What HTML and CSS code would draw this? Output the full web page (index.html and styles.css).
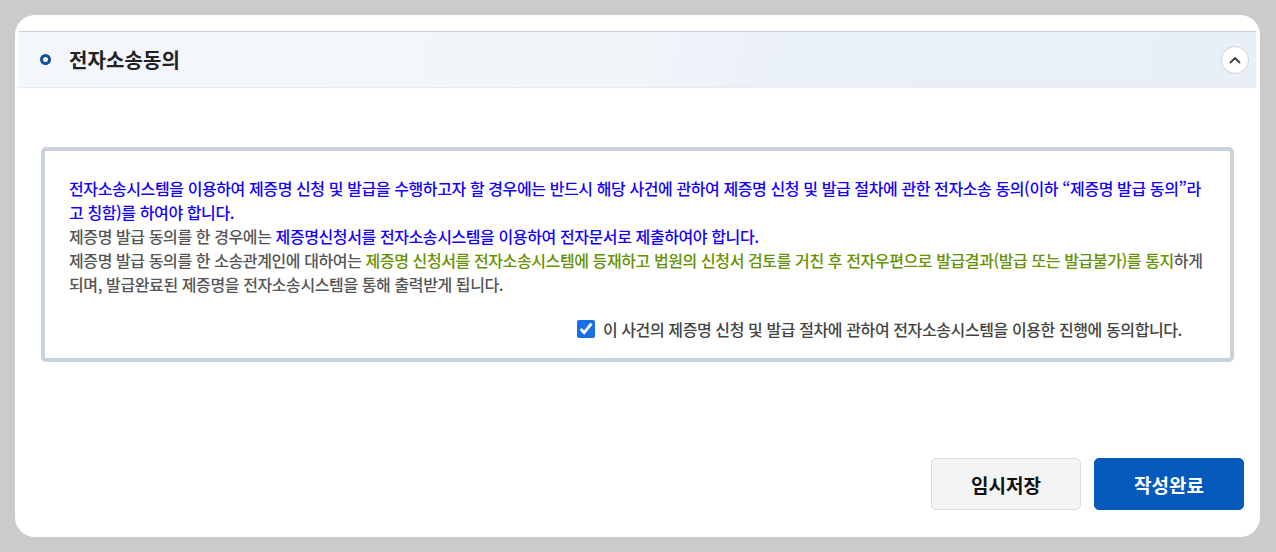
FILE: index.html
```html
<!DOCTYPE html>
<html lang="ko">
<head>
  <meta charset="UTF-8" />
  <title>전자소송동의</title>
  <link rel="stylesheet" href="styles.css">
</head>
<body>
  <div class="card">
    <div class="sec-head">
      <span class="bullet"></span>
      <h2 class="sec-title">전자소송동의</h2>
      <button class="toggle" type="button" aria-label="접기">
        <svg width="12" height="8" viewBox="0 0 12 8"><path d="M1.5 6.5 L6 2 L10.5 6.5" fill="none" stroke="#444" stroke-width="1.8" stroke-linecap="round" stroke-linejoin="round"/></svg>
      </button>
    </div>

    <div class="agree-box">
      <p class="txt">
        <span class="blue">전자소송시스템을 이용하여 제증명 신청 및 발급을 수행하고자 할 경우에는 반드시 해당 사건에 관하여 제증명 신청 및 발급 절차에 관한 전자소송 동의(이하 “제증명 발급 동의”라고 칭함)를 하여야 합니다.</span><br />
        제증명 발급 동의를 한 경우에는 <span class="blue">제증명신청서를 전자소송시스템을 이용하여 전자문서로 제출하여야 합니다.</span><br />
        제증명 발급 동의를 한 소송관계인에 대하여는 <span class="green">제증명 신청서를 전자소송시스템에 등재하고 법원의 신청서 검토를 거친 후 전자우편으로 발급결과(발급 또는 발급불가)를 통지</span>하게 되며, 발급완료된 제증명을 전자소송시스템을 통해 출력받게 됩니다.
      </p>
      <div class="check-row">
        <input type="checkbox" id="agree" checked />
        <label for="agree">이 사건의 제증명 신청 및 발급 절차에 관하여 전자소송시스템을 이용한 진행에 동의합니다.</label>
      </div>
    </div>

    <div class="btn-row">
      <button class="btn btn-gray" type="button">임시저장</button>
      <button class="btn btn-blue" type="button">작성완료</button>
    </div>
  </div>
</body>
</html>
```

FILE: styles.css
```css
body {
  margin: 0;
  padding: 15px;
  background: #cbcbcb;
  font-family: "Noto Sans CJK KR", "Noto Sans", sans-serif;
}
.card {
  width: 1245px;
  height: 522px;
  box-sizing: border-box;
  background: #fff;
  border-radius: 20px;
  padding: 16px 4px 0;
}
.sec-head {
  height: 56px;
  box-sizing: border-box;
  display: flex;
  align-items: center;
  padding-left: 21px;
  border-top: 1px solid #c6d0dd;
  background: linear-gradient(100deg, #f3f6fa 0%, #f2f5fa 50%, #eaf0f8 62%, #e9eff8 100%);
  box-shadow: 0 1px 1px rgba(0, 0, 0, 0.08);
}
.bullet {
  width: 11px;
  height: 11px;
  box-sizing: border-box;
  border: 3px solid #174f97;
  border-radius: 50%;
}
.sec-title {
  margin: 0 0 0 18px;
  font-size: 20px;
  font-weight: 700;
  color: #222;
  letter-spacing: 0.1px;
}
.toggle {
  margin-left: auto;
  margin-right: 7px;
  width: 28px;
  height: 28px;
  padding: 0;
  border: 1px solid #d3d3d3;
  border-radius: 50%;
  background: #fff;
  display: flex;
  align-items: center;
  justify-content: center;
}
.agree-box {
  margin: 60px 22px 0;
  border: 4px solid #c9d1dc;
  border-radius: 5px;
  padding: 25px 24px 15px;
  height: 215px;
  box-sizing: border-box;
}
.txt {
  margin: 0;
  font-size: 16px;
  font-weight: 500;
  line-height: 24px;
  letter-spacing: -0.4px;
  color: #555;
}
.blue {
  color: #1400ff;
}
.green {
  color: #669100;
}
.check-row {
  display: flex;
  align-items: center;
  justify-content: flex-end;
  margin-top: 21px;
  padding-right: 24px;
  font-size: 16px;
  font-weight: 500;
  line-height: 24px;
  letter-spacing: -0.4px;
  color: #444;
}
.check-row input {
  width: 18px;
  height: 18px;
  margin: 0 8px 0 0;
  accent-color: #1a6fe8;
}
.btn-row {
  display: flex;
  justify-content: flex-end;
  gap: 13px;
  margin-top: 96px;
  padding-right: 12px;
}
.btn {
  width: 150px;
  height: 52px;
  border-radius: 5px;
  font-family: inherit;
  font-size: 19px;
  font-weight: 700;
}
.btn-gray {
  background: #f4f4f4;
  border: 1px solid #dcdcdc;
  color: #111;
}
.btn-blue {
  background: #0559bb;
  border: 1px solid #0559bb;
  color: #fff;
}
```
